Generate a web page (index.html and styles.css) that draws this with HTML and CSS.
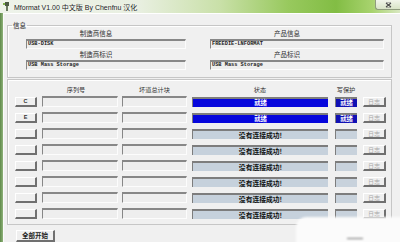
FILE: index.html
```html
<!DOCTYPE html>
<html lang="zh-CN">
<head>
    <meta charset="UTF-8">
    <title>Mformat V1.00</title>
    <link rel="stylesheet" href="styles.css">
</head>
<body>
    <div class="window">
        <div class="titlebar">
            <svg class="app-icon" viewBox="0 0 8 9">
                <rect x="2" y="0" width="4" height="4" fill="#4c5a44"/>
                <rect x="3" y="4" width="2" height="5" fill="#6b7a60"/>
                <rect x="0" y="1" width="2" height="2" fill="#7fb24a"/>
            </svg>
            <span class="title">Mformat V1.00 中文版 By Chenfnu 汉化</span>
            <div class="close-btn">
                <svg viewBox="0 0 7 6"><path d="M1 1 L6 5 M6 1 L1 5" stroke="#4a4a4a" stroke-width="1.1"/><path d="M1 0.5 H6 M1 5.5 H6" stroke="#8a8a8a" stroke-width="0.6"/></svg>
            </div>
        </div>
        <div class="frame">
            <div class="frame-left"></div>
            <div class="client">
                <fieldset class="group info">
                    <legend>信息</legend>
                    <div class="info-grid">
                        <div class="info-col">
                            <div class="label">制造商信息</div>
                            <div class="textbox sunken">USB-DISK</div>
                            <div class="label">制造商标识</div>
                            <div class="textbox sunken">USB Mass Storage</div>
                        </div>
                        <div class="info-col">
                            <div class="label">产品信息</div>
                            <div class="textbox sunken">FREEDIE-LNFORMAT</div>
                            <div class="label">产品标识</div>
                            <div class="textbox sunken">USB Mass Storage</div>
                        </div>
                    </div>
                </fieldset>

                <div class="group devices">
                    <div class="dev-row dev-head">
                        <div class="c-btn"></div>
                        <div class="c-serial head-serial">序列号</div>
                        <div class="c-bad">坏道总计块</div>
                        <div class="c-status">状态</div>
                        <div class="c-wp">写保护</div>
                        <div class="c-log"></div>
                    </div>
                    <div id="devRows"></div>
                </div>

                <div class="start-btn raised">全部开始</div>
            </div>
        </div>
        <div class="smudge"></div>
    </div>

    <script>
        // 8 个设备槽位，前两个已识别
        const drives = [
            { letter: "C", ready: true },
            { letter: "E", ready: true },
            {}, {}, {}, {}, {}, {}
        ];
        let html = "";
        drives.forEach(d => {
            html += `<div class="dev-row">
                <div class="c-btn raised drive-btn">${d.letter || ""}</div>
                <div class="c-serial sunken box"></div>
                <div class="c-bad sunken box"></div>
                ${d.ready
                    ? `<div class="c-status bar ready">就绪</div>`
                    : `<div class="c-status bar idle">没有连接成功!</div>`}
                ${d.ready
                    ? `<div class="c-wp wp ready-wp">就绪</div>`
                    : `<div class="c-wp wp idle-wp"></div>`}
                <div class="c-log raised log-btn">日志</div>
            </div>`;
        });
        document.getElementById("devRows").innerHTML = html;
    </script>
</body>
</html>
```

FILE: styles.css
```css
* {
    box-sizing: border-box;
}
body {
    margin: 0;
    font-family: "Noto Sans CJK SC", "Liberation Sans", sans-serif;
    background: #f0f0f0;
}
.window {
    position: relative;
    width: 400px;
    height: 242px;
    overflow: hidden;
    background: #f0f0f0;
    display: flex;
    flex-direction: column;
}
.titlebar {
    height: 13px;
    flex-shrink: 0;
    display: flex;
    align-items: center;
    background: linear-gradient(90deg, #eef3ea 0%, #e8efe0 35%, #c9e0a8 55%, #98c95e 72%, #82bd44 84%, #a8d36e 93%, #d9e8c2 100%);
}
.app-icon {
    width: 8px;
    height: 9px;
    margin-left: 3px;
}
.title {
    margin-left: 3px;
    font-family: "Liberation Sans", "Noto Sans CJK SC", sans-serif;
    font-size: 7px;
    color: #1c1c1c;
    white-space: nowrap;
    text-shadow: 0 0 3px #ffffff;
}
.close-btn {
    margin-left: auto;
    align-self: flex-start;
    width: 25px;
    height: 10px;
    display: flex;
    align-items: center;
    justify-content: center;
    background: linear-gradient(#f1f5ea, #d8e4c6);
    border: 1px solid #8f9c7e;
    border-top: none;
    border-right: none;
    border-radius: 0 0 0 3px;
}
.close-btn svg {
    width: 7px;
    height: 6px;
}
.frame {
    flex: 1;
    display: flex;
}
.frame-left {
    width: 3px;
    background: linear-gradient(90deg, #5f8a4a, #8fb27a);
}
.client {
    flex: 1;
    padding: 7px 8px 0 4px;
    border-top: 1px solid #ffffff;
    border-left: 1px solid #fbfbfb;
}

/* 分组框 */
.group {
    border: 1px solid #c6c6c6;
    box-shadow: 1px 1px 0 #ffffff inset;
}
fieldset.group {
    margin: 0 0 0 -1px;
    padding: 0;
    min-width: 0;
}
legend {
    margin-left: 4px;
    padding: 0 1px;
    font-size: 6.5px;
    line-height: 8px;
    color: #222;
}
.info-grid {
    display: grid;
    grid-template-columns: 160px 174px;
    column-gap: 24px;
    padding: 1px 7px 5px 18px;
}
.label {
    height: 7px;
    line-height: 7px;
    font-size: 6.5px;
    color: #2a2a2a;
    text-align: center;
    padding-right: 20px;
    white-space: nowrap;
}
.textbox {
    height: 10px;
    margin: 2px 0;
    padding-left: 1px;
    font-family: "Liberation Mono", monospace;
    font-weight: bold;
    font-size: 5.3px;
    line-height: 7px;
    color: #222;
    white-space: nowrap;
}
.sunken {
    border-style: solid;
    border-width: 2px 1px 1px 1px;
    border-color: #878787 #fcfcfc #fcfcfc #878787;
    background: #eeeeee;
}
.raised {
    border-style: solid;
    border-width: 1px 2px 2px 1px;
    border-color: #ffffff #707070 #707070 #ffffff;
    background: #efefef;
}

/* 设备列表 */
.devices {
    margin: 1px 0 0 -1px;
    padding: 6px 0 5px 7px;
}
.dev-row {
    display: flex;
    align-items: center;
    height: 11px;
    margin-bottom: 5px;
}
#devRows .dev-row:last-child {
    margin-bottom: 0;
}
.dev-head {
    height: 8px;
    margin-bottom: 2px;
    font-size: 6.2px;
    line-height: 8px;
    color: #333;
    text-align: center;
    white-space: nowrap;
}
.c-btn { width: 22px; }
.c-serial { width: 76px; margin-left: 5px; }
.c-bad { width: 65px; margin-left: 4px; }
.c-status { width: 136px; margin-left: 5px; }
.c-wp { width: 22px; margin-left: 7px; }
.c-log { width: 23px; margin-left: 6px; }
.head-serial {
    padding-right: 8px;
}
.box {
    height: 11px;
}
.drive-btn {
    height: 10px;
    font-size: 5.5px;
    font-weight: bold;
    line-height: 7px;
    text-align: center;
    color: #333;
    font-family: "Liberation Sans", sans-serif;
}
.bar {
    height: 10px;
    font-size: 6.8px;
    font-weight: bold;
    line-height: 8px;
    text-align: center;
    white-space: nowrap;
    border-top: 2px solid #7d7d7d;
    border-left: 1px solid #7d7d7d;
}
.ready {
    background: #0606dc;
    color: #ffffff;
    font-size: 6.3px;
}
.idle {
    background: #c6d1dc;
    color: #111;
}
.wp {
    height: 10px;
    font-size: 6.3px;
    font-weight: bold;
    line-height: 8px;
    text-align: center;
    color: #ffffff;
    border-top: 2px solid #7d7d7d;
    border-left: 1px solid #7d7d7d;
}
.ready-wp {
    background: #1010b4;
}
.idle-wp {
    background: #c8d2dc;
}
.log-btn {
    height: 10px;
    font-size: 6px;
    line-height: 7px;
    text-align: center;
    color: #a9a9a9;
}
.start-btn {
    width: 39px;
    height: 12px;
    margin: 5px 0 0 8px;
    font-size: 6.5px;
    font-weight: bold;
    line-height: 9px;
    text-align: center;
    color: #222;
}

/* 右下角的水印涂抹 */
.smudge {
    position: absolute;
    left: 296px;
    top: 217px;
    width: 112px;
    height: 30px;
    background: #fbfbfb;
    border-top-left-radius: 10px;
    filter: blur(1px);
}
.smudge::after {
    content: "";
    position: absolute;
    left: 51px;
    top: 21px;
    width: 16px;
    height: 1px;
    background: #6a6a6a;
}
```
